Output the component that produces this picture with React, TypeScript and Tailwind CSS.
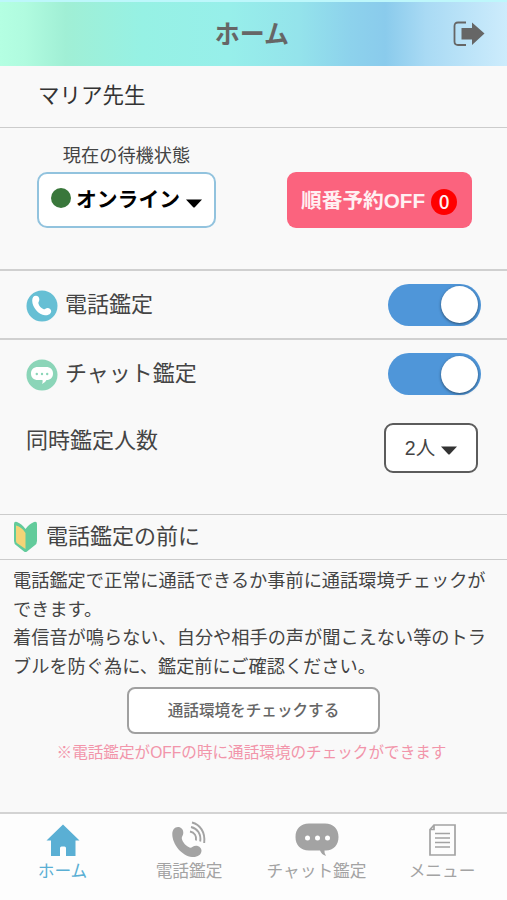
import { useState } from "react";
import type { ReactNode } from "react";

const PhoneShape = () => (
  <path d="M6 .5C9 .5 11.500 3 11.300 6.500C11.200 9 9.500 10 9.800 12C10.500 16 14.500 20 18 21.200C19.500 21.700 21 19.300 24 19.200C27 19.200 29.500 21.500 29.500 24C29.500 28.500 25 31 20 30.500C10 29.500 .5 18 .3 8C.2 3.500 2.500 .5 6 .5Z" />
);

const BeginnerMark = () => (
  <svg width="23" height="32" viewBox="0 0 23 32">
    <path d="M0 3Q0 0 3 1Q8 3 11.500 8Q15 3 20 1Q23 0 23 3V20Q23 23 20.500 24.500L13 30.500Q11.500 31.500 10 30.500L2.500 24.500Q0 23 0 20Z" fill="#62cb9b" />
    <path d="M2 4.500Q8 6 11.500 12V28L3.500 22.500Q2 21.500 2 20Z" fill="#f4d477" />
  </svg>
);

const Toggle = ({ on, onChange }: { on: boolean; onChange: () => void }) => (
  <button
    type="button"
    role="switch"
    aria-checked={on}
    onClick={onChange}
    className={`flex h-[42px] w-[93px] items-center rounded-full px-[3px] ${on ? "justify-end bg-[#4f96d9]" : "justify-start bg-gray-300"}`}
  >
    <span className="size-[37px] rounded-full bg-white shadow-[0_1px_3px_rgba(0,0,0,0.5)]" />
  </button>
);

const Caret = ({ className }: { className?: string }) => (
  <svg width="16" height="9" viewBox="0 0 16 9" className={className}>
    <path d="M0 .5H16L9 8Q8 9 7 8Z" fill="currentColor" />
  </svg>
);

const navItems: { label: string; width: string; icon: ReactNode }[] = [
  {
    label: "ホーム",
    width: "w-[125px]",
    icon: (
      <svg width="34" height="33" viewBox="0 0 34 33" fill="currentColor">
        <path d="M17 .5L33.500 16.500H29.500V32H20V24Q20 22.500 18.500 22.500H15.500Q14 22.500 14 24V32H5V16.500H.5Z" />
      </svg>
    ),
  },
  {
    label: "電話鑑定",
    width: "w-[128px]",
    icon: (
      <svg width="36" height="38" viewBox="0 0 36 38" fill="currentColor">
        <g transform="translate(1 5.500)">
          <PhoneShape />
        </g>
        <g fill="none" stroke="currentColor" strokeWidth="1.900">
          <path d="M21 1.500C29 3.500 34.500 11 33.200 22" />
          <path d="M20 6C26.500 7.500 30.300 13 29.200 20.500" />
          <path d="M19 10.500C23.500 11.500 25.800 15 25 19.500" />
        </g>
      </svg>
    ),
  },
  {
    label: "チャット鑑定",
    width: "w-[127px]",
    icon: (
      <svg width="44" height="34" viewBox="0 0 44 34">
        <path d="M14 .5H30C38.500.5 43.500 6 43.500 14S38.500 27.500 31 27.500H29.500Q29 30.500 31 33Q26.500 31.500 25 27.500H14C5.500 27.500.5 22 .5 14S5.500.5 14 .5Z" fill="currentColor" />
        <g fill="#fff">
          <circle cx="12.500" cy="15" r="2.500" />
          <circle cx="22.500" cy="15" r="2.500" />
          <circle cx="32.500" cy="15" r="2.500" />
        </g>
      </svg>
    ),
  },
  {
    label: "メニュー",
    width: "w-[124px]",
    icon: (
      <svg width="27" height="32" viewBox="0 0 27 32" fill="none" stroke="currentColor" strokeWidth="1.700">
        <path d="M5 1H26V31H1V5.500ZM5 1V5.500H1" />
        <path d="M6 9.500H21M6 14H21M6 18.500H21M6 23H21" />
      </svg>
    ),
  },
];

export default function App() {
  const [phone, setPhone] = useState(true);
  const [chat, setChat] = useState(true);
  const [active, setActive] = useState(0);

  return (
    <div className="flex h-[900px] w-[507px] flex-col overflow-hidden bg-[#f9f9f9] font-['Liberation_Sans','Noto_Sans_CJK_JP',sans-serif] text-[#444]">
      <header className="grid h-[66px] shrink-0 grid-cols-[1fr_auto_1fr] items-center border-t-2 border-[#bdf7fb] bg-[linear-gradient(90deg,#b4ffe2_0%,#b0fbdf_5%,#a0efd5_13%,#96f1e4_28%,#97efea_45%,#94e3eb_59%,#8dd2ec_69%,#8acbec_76%,#a9daf4_84%,#cdecfc_100%)]">
        <h1 className="col-start-2 mr-[3px] text-[25px] font-bold leading-none text-[#666]">ホーム</h1>
        <button type="button" aria-label="ログアウト" className="mr-[22px] justify-self-end text-[#666]">
          <svg width="32" height="26" viewBox="0 0 32 26" fill="none">
            <path d="M13 1.500H5Q1.500 1.500 1.500 5V20.500Q1.500 24 5 24H13" stroke="currentColor" strokeWidth="1.800" />
            <path d="M8.500 7H19V1.500L31.500 12.500L19 24V18.500H8.500Z" fill="currentColor" />
          </svg>
        </button>
      </header>

      <div className="flex h-[62px] shrink-0 items-center border-b border-[#ccc] pl-[38px] text-[21.500px] text-[#333]">
        マリア先生
      </div>

      {/* Waiting status */}
      <section className="flex h-[143px] shrink-0 justify-between border-b-2 border-[#d0d0d0] pl-[37px] pr-[35px] pt-4">
        <div className="flex w-[179px] flex-col items-center">
          <span className="h-7 text-[18.200px] leading-[25px]">現在の待機状態</span>
          <button type="button" className="flex h-14 w-full items-center rounded-[10px] border-2 border-[#92c3de] bg-white pl-3 text-[20.800px] font-bold text-black">
            <span className="mb-1 mr-[5px] size-5 rounded-full bg-[#39773b]" />
            オンライン
            <Caret className="ml-1.5 mt-1.5" />
          </button>
        </div>
        <button type="button" className="mt-7 flex h-14 w-[185px] items-center rounded-[9px] bg-[#fb637e] pl-3.5 text-[20.700px] font-bold text-[#fff0f2]">
          <span className="mt-0.5">順番予約OFF</span>
          <span className="ml-1.5 mt-[3px] flex size-[26px] items-center justify-center rounded-full bg-[#ff0000] pb-0.5 font-['Noto_Sans_CJK_JP',sans-serif] text-[19px] font-medium leading-none">0</span>
        </button>
      </section>

      <section className="flex h-[69px] shrink-0 items-center border-b-2 border-[#d0d0d0] pl-[26px] pr-[26px]">
        <svg width="32" height="32" viewBox="0 0 32 32" className="mt-0.5">
          <circle cx="16" cy="16" r="15.500" fill="#66bfd4" />
          <g transform="translate(6 5.500) scale(.65)" fill="#fff">
            <PhoneShape />
          </g>
        </svg>
        <span className="ml-[7px] mr-auto text-[22px]">電話鑑定</span>
        <Toggle on={phone} onChange={() => setPhone(!phone)} />
      </section>

      {/* Chat settings */}
      <section className="h-[175px] shrink-0 border-b border-[#ccc] pl-[26px] pr-[26px]">
        <div className="flex h-[68px] items-center">
          <svg width="32" height="32" viewBox="0 0 32 32" className="mt-0.5">
            <circle cx="16" cy="16" r="15.500" fill="#8bd5b8" />
            <path d="M12 8H20C24.500 8 27 10.500 27 14.500S24.500 21 20.500 21Q19.500 23.500 16 25Q17 23 16.500 21H12C7.500 21 5 18.500 5 14.500S7.500 8 12 8Z" fill="#fff" />
            <g fill="#8bd5b8">
              <circle cx="10.800" cy="15" r="1.200" />
              <circle cx="16" cy="15" r="1.200" />
              <circle cx="21.200" cy="15" r="1.200" />
            </g>
          </svg>
          <span className="-mt-0.5 ml-[7px] mr-auto text-[22px]">チャット鑑定</span>
          <Toggle on={chat} onChange={() => setChat(!chat)} />
        </div>
        <div className="flex items-start justify-between pr-[3px] pt-[15px]">
          <span className="text-[22px] leading-9">同時鑑定人数</span>
          <button type="button" className="flex h-[50px] w-[94px] items-center justify-center rounded-[9px] border-2 border-[#5c5c5c] bg-white text-[19.500px]">
            <span className="mt-0.5">2人</span>
            <Caret className="ml-1.5 mt-1 text-[#333]" />
          </button>
        </div>
      </section>

      <h2 className="flex h-[45px] shrink-0 items-center gap-[9px] border-b border-[#ccc] pl-3.5 text-[22px] font-normal">
        <BeginnerMark />
        <span className="-mt-0.5">電話鑑定の前に</span>
      </h2>

      <section className="flex grow flex-col items-center pt-[7px]">
        <p className="w-full pl-[13px] text-[18.200px] leading-[28.500px]">
          電話鑑定で正常に通話できるか事前に通話環境チェックが
          <br />
          できます。
          <br />
          着信音が鳴らない、自分や相手の声が聞こえない等のトラ
          <br />
          ブルを防ぐ為に、鑑定前にご確認ください。
        </p>
        <button type="button" className="mt-1.5 h-[47px] w-[253px] rounded-[8px] border-2 border-[#a0a0a0] bg-white text-[15.600px] font-medium text-[#666]">
          通話環境をチェックする
        </button>
        <p className="mr-1 mt-[7px] text-[15.600px] text-[#f295aa]">※電話鑑定がOFFの時に通話環境のチェックができます</p>
      </section>

      <nav className="flex h-[88px] shrink-0 border-t-2 border-[#d3d3d3] bg-[#fdfdfd]">
        {navItems.map((item, i) => (
          <button
            key={item.label}
            type="button"
            onClick={() => setActive(i)}
            className={`flex shrink-0 flex-col items-center pt-1.5 ${item.width} ${i === active ? "text-[#5aafd4]" : "text-[#a3a3a3]"}`}
          >
            <span className="flex h-[40px] items-center justify-center">{item.icon}</span>
            <span className="whitespace-nowrap text-[16.700px] leading-6">{item.label}</span>
          </button>
        ))}
      </nav>
    </div>
  );
}
